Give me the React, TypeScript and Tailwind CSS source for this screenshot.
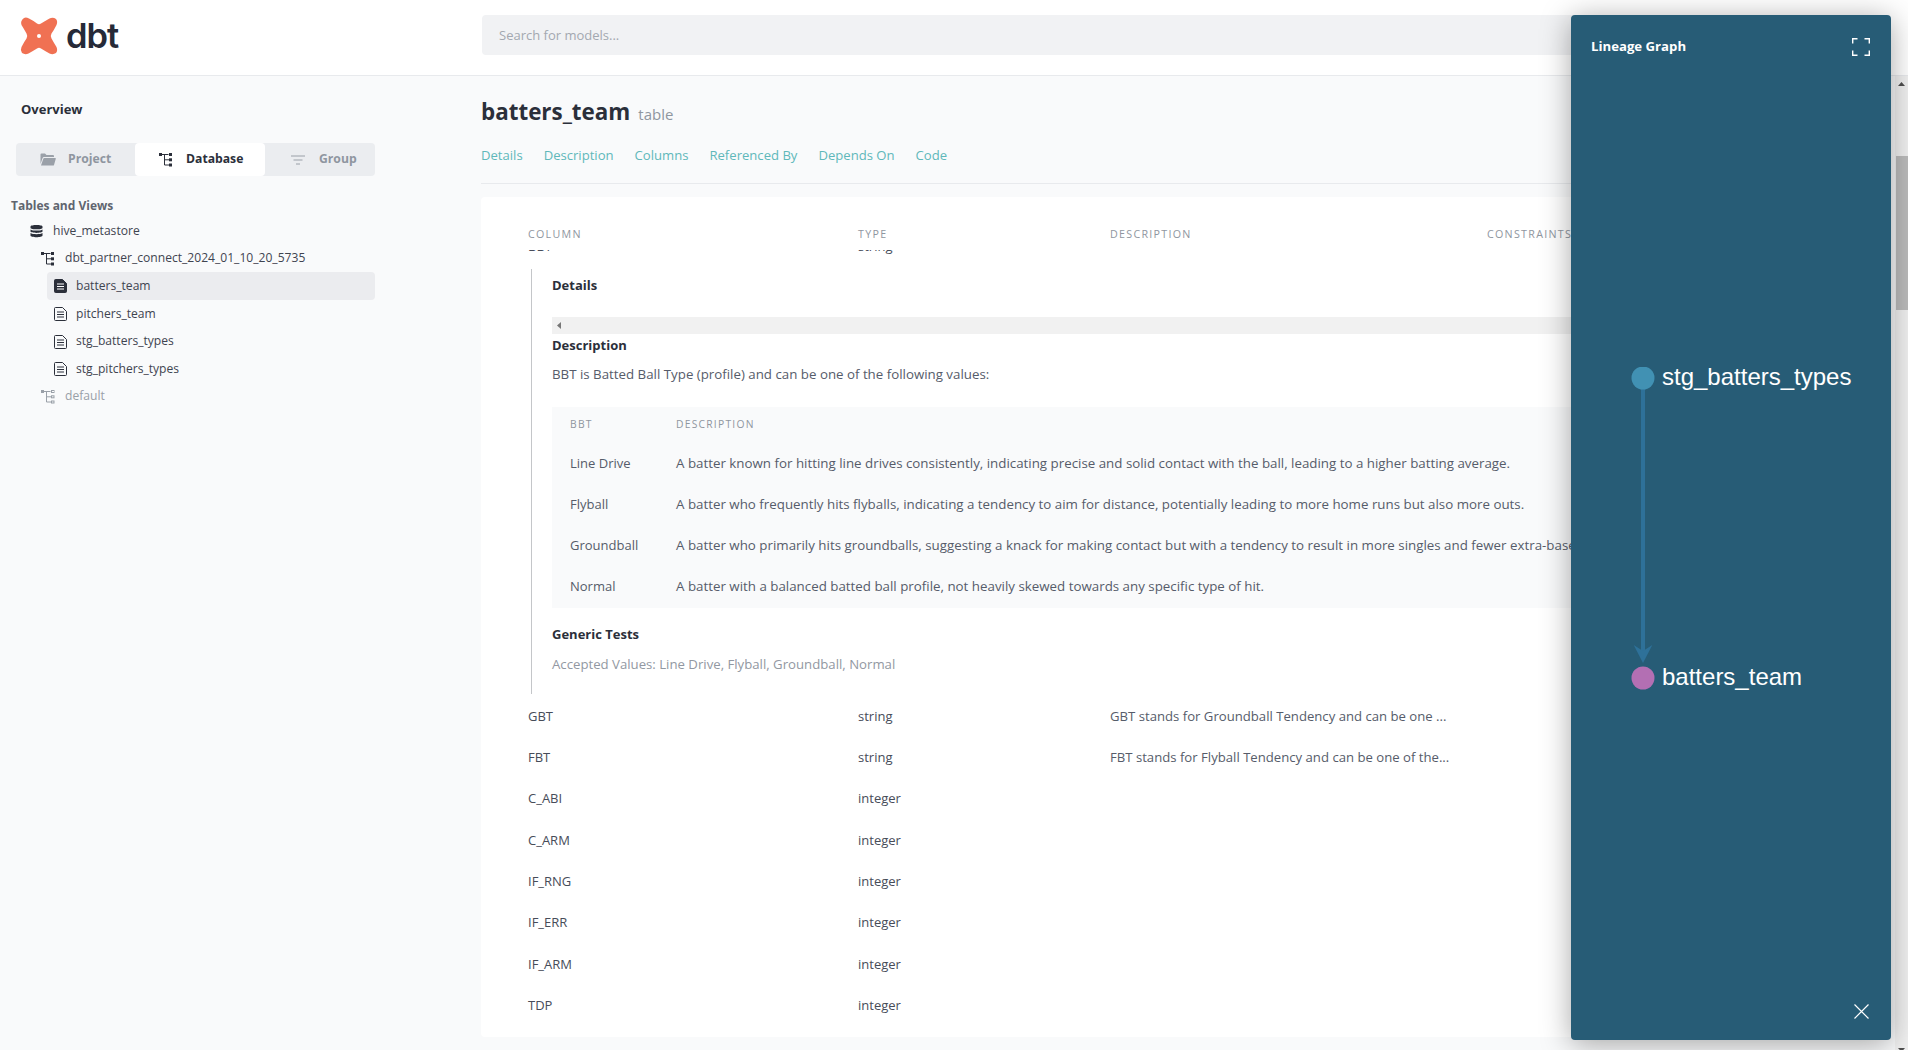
import React from "react";

const Logo = () => (
  <svg width="38" height="38" viewBox="0 0 38 38" className="shrink-0">
    <path fill="#f07153" d="M4 1 Q6 0 9 1.5 Q14 4 17 6.5 Q19 8 21 6.5 Q26 3.5 29.5 1.5 Q33 0 36 2 Q38 4.5 36.5 8 Q34 13 31.5 16.5 Q30 19 31.5 21.5 Q34 26 36.5 30 Q38 33.5 36 36 Q33 38 29.5 36.5 Q25 34 21 31.5 Q19 30 17 31.5 Q13 34 8.5 36.5 Q5 38 2 36 Q0 33 1.5 30 Q4 25 6.5 21.5 Q8 19 6.5 16.5 Q4 12 1.5 8 Q0 4 4 1 Z" />
    <circle cx="19" cy="19" r="2" fill="#fff" />
  </svg>
);

const Tree = ({ color = "#2b2f3a", light = false }: { color?: string; light?: boolean }) => (
  <svg width="14" height="14" viewBox="0 0 14 14" className="shrink-0">
    <path d="M1 1.5H9.5M5.5 1.5V12M5.5 6.8H10M5.5 12H10" stroke={color} strokeWidth="1" fill="none" />
    {light ? (
      <g fill="none" stroke={color} strokeWidth="1">
        <rect x="0.5" y="0.5" width="2" height="2" />
        <rect x="10.5" y="0.5" width="2.5" height="2" />
        <rect x="10.5" y="5.8" width="2.5" height="2" />
        <rect x="10.5" y="11" width="2.5" height="2" />
      </g>
    ) : (
      <g fill={color}>
        <rect x="0" y="0" width="3" height="3" />
        <rect x="10" y="0" width="3" height="3" />
        <rect x="10" y="5.3" width="3" height="3" />
        <rect x="10" y="10.5" width="3" height="3" />
      </g>
    )}
  </svg>
);

const Doc = ({ active = false }: { active?: boolean }) => (
  <svg width="13" height="14" viewBox="0 0 13 14" className="shrink-0">
    <path
      d="M1.5 0.5H8.5L12.5 4.5V12.5Q12.5 13.5 11.5 13.5H1.5Q0.5 13.5 0.5 12.5V1.5Q0.5 0.5 1.5 0.5Z"
      fill={active ? "#2b2f3a" : "none"}
      stroke="#2b2f3a"
      strokeWidth="1"
    />
    <path d="M3 5H10M3 7.5H10M3 10H10" stroke={active ? "#fff" : "#2b2f3a"} strokeWidth="1" />
  </svg>
);

const DbIcon = () => (
  <svg width="13" height="14" viewBox="0 0 13 14" className="shrink-0">
    <path fill="#2b2f3a" d="M0.5 2.5C0.5 0.5 12.5 0.5 12.5 2.5V4C12.5 5.8 0.5 5.8 0.5 4ZM0.5 5.4C2.5 7 10.5 7 12.5 5.4V7.6C12.5 9.3 0.5 9.3 0.5 7.6ZM0.5 9C2.5 10.6 10.5 10.6 12.5 9V11.6C12.5 13.8 0.5 13.8 0.5 11.6Z" />
  </svg>
);

const FolderIcon = () => (
  <svg width="16" height="13" viewBox="0 0 16 13" className="shrink-0">
    <path fill="#9aa0a8" d="M0.5 11V1.5Q0.5 0.5 1.5 0.5H5L6.5 2H13Q14 2 14 3V4H4Q3 4 2.6 5ZM1 12.5L3.4 5.6Q3.6 5 4.4 5H15.2Q16 5 15.8 5.8L14 12Q13.8 12.5 13.2 12.5Z" />
  </svg>
);

const FilterIcon = () => (
  <svg width="14" height="10" viewBox="0 0 14 10" className="shrink-0">
    <path d="M0 1H14M2.5 5H11.5M5 9H9" stroke="#9aa0a8" strokeWidth="1" />
  </svg>
);

const bbtRows = [
  ["Line Drive", "A batter known for hitting line drives consistently, indicating precise and solid contact with the ball, leading to a higher batting average."],
  ["Flyball", "A batter who frequently hits flyballs, indicating a tendency to aim for distance, potentially leading to more home runs but also more outs."],
  ["Groundball", "A batter who primarily hits groundballs, suggesting a knack for making contact but with a tendency to result in more singles and fewer extra-base hits."],
  ["Normal", "A batter with a balanced batted ball profile, not heavily skewed towards any specific type of hit."],
];

const rows = [
  ["GBT", "string", "GBT stands for Groundball Tendency and can be one ..."],
  ["FBT", "string", "FBT stands for Flyball Tendency and can be one of the..."],
  ["C_ABI", "integer", ""],
  ["C_ARM", "integer", ""],
  ["IF_RNG", "integer", ""],
  ["IF_ERR", "integer", ""],
  ["IF_ARM", "integer", ""],
  ["TDP", "integer", ""],
];

const th = "text-[10.7px] font-medium tracking-[0.12em] text-[#8f96a0] uppercase";
const thSmall = "text-[10.3px] font-medium tracking-[0.12em] text-[#8f96a0] uppercase";

export default function App() {
  return (
    <div className="relative w-[1908px] h-[1050px] overflow-hidden bg-[#f9fafb] font-['Open_Sans',sans-serif] text-[13px] text-[#474c59]">
      <header className="flex items-center h-[76px] bg-white border-b border-[#e8eaed]">
        <div className="flex items-center w-[482px] pl-[20px] -mt-[3px]">
          <Logo />
          <span className="ml-[8px] font-['Inter',sans-serif] font-semibold text-[34.5px] leading-none tracking-[-0.03em] text-[#262a38]">dbt</span>
        </div>
        <div className="flex items-center w-[1200px] h-[40px] -mt-[5px] rounded-[4px] bg-[#f1f2f4] pl-[17px] pt-[1px] text-[#a3a8b0]">Search for models...</div>
      </header>

      <div className="flex h-[974px]">
        <aside className="w-[481px] shrink-0">
          <div className="pl-[21px] pt-[24px] h-[67px] font-bold text-[#2b2f3a] leading-[18px]">Overview</div>
          <div className="flex ml-[16px] w-[359px] h-[33px] bg-[#ebedf0] rounded-[4px] font-bold text-[12.2px] text-[#8f96a0]">
            <div className="flex items-center gap-[12px] pl-[24px] w-[119px]"><FolderIcon />Project</div>
            <div className="flex items-center gap-[13px] pl-[24px] w-[130px] bg-white rounded-[4px] text-[#2b2f3a]"><Tree />Database</div>
            <div className="flex items-center gap-[14px] pl-[26px] w-[110px]"><FilterIcon />Group</div>
          </div>
          <div className="pl-[11px] mt-[21px] font-bold text-[12px] leading-[18px] text-[#60656f]">Tables and Views</div>
          <div className="mt-[2px] text-[12.1px] text-[#3f4450]">
            <div className="flex items-center gap-[10px] pl-[30px] h-[28px]"><DbIcon /><span>hive_metastore</span></div>
            <div className="flex items-center gap-[10px] pl-[41px] h-[27px]"><Tree /><span>dbt_partner_connect_2024_01_10_20_5735</span></div>
            <div className="flex items-center gap-[9px] pl-[7px] ml-[47px] w-[328px] h-[28px] bg-[#ebecef] rounded-[4px]"><Doc active /><span>batters_team</span></div>
            <div className="flex items-center gap-[9px] pl-[54px] h-[28px]"><Doc /><span>pitchers_team</span></div>
            <div className="flex items-center gap-[9px] pl-[54px] h-[27px]"><Doc /><span>stg_batters_types</span></div>
            <div className="flex items-center gap-[9px] pl-[54px] h-[28px]"><Doc /><span>stg_pitchers_types</span></div>
            <div className="flex items-center gap-[10px] pl-[41px] h-[27px] text-[#9aa0a8]"><Tree color="#9aa0a8" light /><span>default</span></div>
          </div>
        </aside>

        <main className="flex-1 min-w-0 pr-[26px]">
          <div className="flex items-baseline gap-[8px] pt-[19px] h-[63px]">
            <h1 className="font-bold text-[22.4px] leading-[34px] text-[#2b2f3a]">batters_team</h1>
            <span className="text-[15px] text-[#8f96a0]">table</span>
          </div>
          <nav className="flex gap-[21px] h-[45px] pt-[6px] leading-[20px] text-[13.1px] text-[#5fb8ba] border-b border-[#e8eaed]">
            <span>Details</span><span>Description</span><span>Columns</span><span>Referenced By</span><span>Depends On</span><span>Code</span>
          </nav>
          <section className="mt-[13px] h-[840px] bg-white rounded-[4px] overflow-hidden">
            <div className="flex pl-[47px] pt-[27px] h-[53px] leading-[20px]">
              <div className={`w-[330px] ${th}`}>Column</div>
              <div className={`w-[252px] ${th}`}>Type</div>
              <div className={`w-[377px] ${th}`}>Description</div>
              <div className={th}>Constraints</div>
            </div>
            <div className="flex pl-[47px] h-[4px] overflow-hidden">
              <div className="w-[330px] -mt-[13px] leading-[18px]">BBT</div>
              <div className="-mt-[13px] leading-[18px]">string</div>
            </div>
            <div className="ml-[50px] mt-[15px] h-[425px] border-l border-[#c4c6c9] pl-[20px] pr-[20px]">
              <div className="pt-[7px] h-[48px] font-bold text-[#2b2f3a] leading-[18px]">Details</div>
              <div className="flex items-center h-[17px] bg-[#f1f1f1] pl-[5px]">
                <svg width="4" height="7" viewBox="0 0 4 7"><path d="M4 0V7L0 3.5Z" fill="#777" /></svg>
              </div>
              <div className="h-[30px] mt-[1px] pt-[1px] font-bold text-[#2b2f3a] leading-[18px]">Description</div>
              <div className="h-[42px] leading-[18px] text-[13.3px] text-[#565c6a]">BBT is Batted Ball Type (profile) and can be one of the following values:</div>
              <div className="bg-[#f9fafb] h-[201px] w-[1100px] pl-[18px] pt-[7px] text-[#565c6a]">
                <div className="flex h-[20px] mb-[9px] leading-[20px]">
                  <div className={`w-[106px] ${thSmall}`}>BBT</div>
                  <div className={thSmall}>Description</div>
                </div>
                {bbtRows.map(([a, b]) => (
                  <div key={a} className="flex h-[41px] items-center whitespace-nowrap text-[13.33px]">
                    <div className="w-[106px] text-[13px]">{a}</div>
                    <div>{b}</div>
                  </div>
                ))}
              </div>
              <div className="mt-[17px] font-bold text-[#2b2f3a] leading-[18px]">Generic Tests</div>
              <div className="mt-[12px] leading-[18px] text-[13.2px] text-[#9298a2]">Accepted Values: Line Drive, Flyball, Groundball, Normal</div>
            </div>
            <div className="mt-[2px]">
              {rows.map(([a, b, c]) => (
                <div key={a} className="flex items-center h-[41.3px] pl-[47px] whitespace-nowrap">
                  <div className="w-[330px]">{a}</div>
                  <div className="w-[252px]">{b}</div>
                  <div className="text-[13.15px] text-[#565c6a]">{c}</div>
                </div>
              ))}
            </div>
          </section>
        </main>

        <div className="flex flex-col justify-between items-center w-[13px] h-[982px] shrink-0 bg-[#f1f1f1] py-[6px]">
          <svg width="7" height="4" viewBox="0 0 7 4"><path d="M3.5 0L7 4H0Z" fill="#505050" /></svg>
          <svg width="7" height="4" viewBox="0 0 7 4"><path d="M3.5 4L7 0H0Z" fill="#505050" /></svg>
          <div className="absolute top-[156px] right-0 w-[12px] h-[154px] bg-[#bcbcbc]" />
        </div>
      </div>

      <aside className="absolute left-[1571px] top-[15px] w-[320px] h-[1025px] rounded-[4px] bg-[#275c76] text-white shadow-[0_4px_30px_rgba(0,0,0,0.35)]">
        <div className="absolute left-[20px] top-[22px] font-bold text-[13.2px] leading-[18px]">Lineage Graph</div>
        <svg className="absolute right-[21px] top-[23px]" width="18" height="18" viewBox="0 0 18 18" fill="none" stroke="#fff" strokeWidth="1.4">
          <path d="M0.7 5.5V0.7H5.5M12.5 0.7H17.3V5.5M0.7 12.5V17.3H5.5M12.5 17.3H17.3V12.5" />
        </svg>
        <svg className="absolute left-[60px] top-[352px]" width="24" height="330" viewBox="0 0 24 330">
          <path d="M12 10V285" stroke="#2e7199" strokeWidth="4" />
          <path d="M2.7 278L12 296L21.3 278L12 284Z" fill="#2e7199" />
          <circle cx="12" cy="11" r="11.5" fill="#4191b3" />
          <circle cx="12" cy="311" r="11.5" fill="#b36fb3" />
        </svg>
        <div className="absolute left-[91px] top-[347px] font-['Liberation_Sans',sans-serif] text-[24px] leading-[30px]">stg_batters_types</div>
        <div className="absolute left-[91px] top-[647px] font-['Liberation_Sans',sans-serif] text-[24px] leading-[30px]">batters_team</div>
        <svg className="absolute left-[283px] top-[989px]" width="15" height="15" viewBox="0 0 15 15" stroke="#fff" strokeWidth="1.2">
          <path d="M0.5 0.5L14.5 14.5M14.5 0.5L0.5 14.5" />
        </svg>
      </aside>
    </div>
  );
}
